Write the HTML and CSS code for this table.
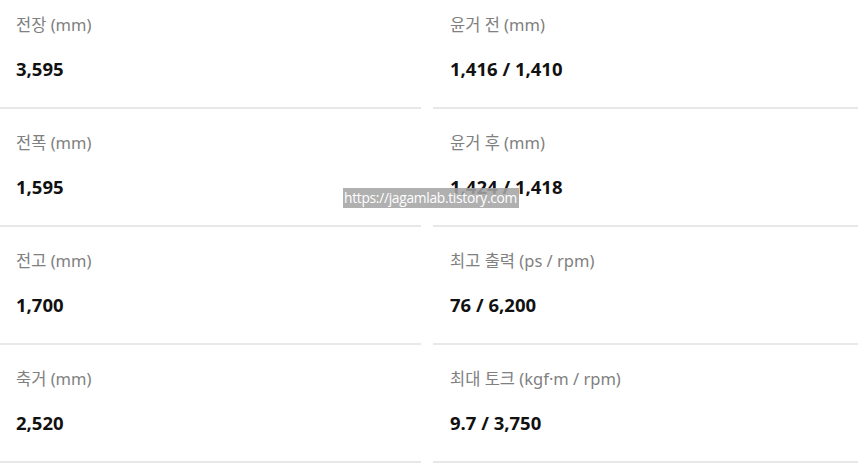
FILE: index.html
```html
<!DOCTYPE html>
<html lang="ko">
<head>
<meta charset="utf-8">
<link rel="stylesheet" href="styles.css">
</head>
<body>
<div class="specs">
  <div class="cell"><div class="label">전장 (mm)</div><div class="value">3,595</div></div>
  <div class="cell"><div class="label">윤거 전 (mm)</div><div class="value">1,416 / 1,410</div></div>
  <div class="cell"><div class="label">전폭 (mm)</div><div class="value">1,595</div></div>
  <div class="cell"><div class="label">윤거 후 (mm)</div><div class="value">1,424 / 1,418</div></div>
  <div class="cell"><div class="label">전고 (mm)</div><div class="value">1,700</div></div>
  <div class="cell"><div class="label">최고 출력 (ps / rpm)</div><div class="value">76 / 6,200</div></div>
  <div class="cell"><div class="label">축거 (mm)</div><div class="value">2,520</div></div>
  <div class="cell"><div class="label">최대 토크 (kgf·m / rpm)</div><div class="value">9.7 / 3,750</div></div>
</div>
<div class="watermark">https://jagamlab.tistory.com</div>
</body>
</html>
```

FILE: styles.css
```css
html, body {
  margin: 0;
  padding: 0;
  background: #ffffff;
}
body {
  font-family: "Noto Sans", "Noto Sans CJK KR", sans-serif;
  position: relative;
  width: 858px;
  height: 465px;
  overflow: hidden;
}
.specs {
  display: grid;
  grid-template-columns: 421px 425px;
  column-gap: 12px;
  margin-top: -9px;
}
.cell {
  box-sizing: border-box;
  height: 118px;
  border-bottom: 2px solid #e8e8e8;
  padding: 23px 0 0 16px;
}
.cell:nth-child(even) {
  padding-left: 17px;
}
.label {
  font-size: 16.5px;
  line-height: 22px;
  color: #808080;
}
.value {
  margin-top: 21px;
  font-size: 18.5px;
  line-height: 24px;
  font-weight: 700;
  color: #111111;
}
.watermark {
  position: absolute;
  left: 343px;
  top: 188px;
  height: 20px;
  padding: 0 2px 0 1px;
  background: rgba(165, 165, 165, 0.88);
  color: #ffffff;
  font-family: "Open Sans", sans-serif;
  font-size: 13.8px;
  line-height: 20px;
  letter-spacing: -0.3px;
  white-space: nowrap;
}
```
